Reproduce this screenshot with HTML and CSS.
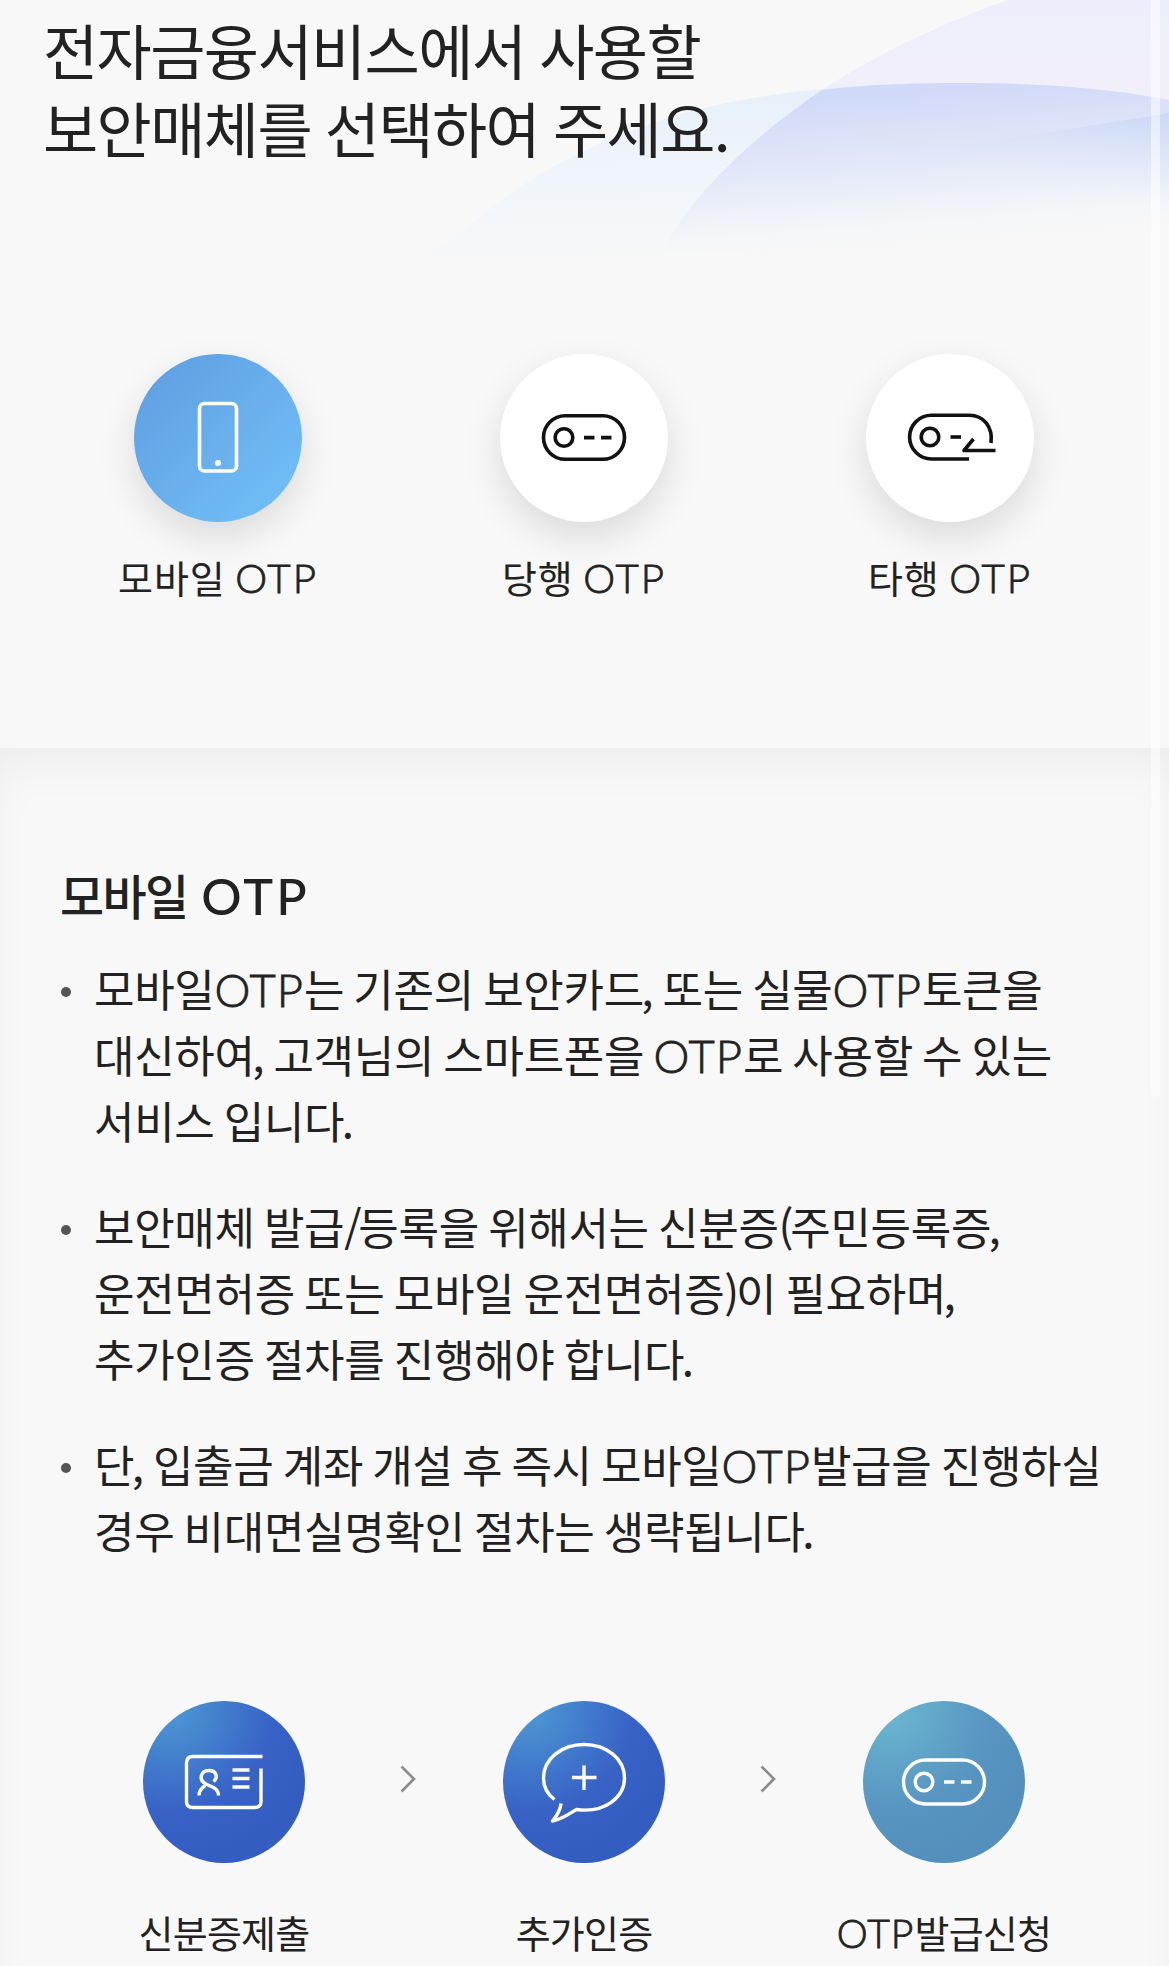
FILE: index.html
```html
<!DOCTYPE html>
<html lang="ko">
<head>
<meta charset="utf-8">
<title>보안매체 선택</title>
<link rel="stylesheet" href="styles.css">
</head>
<body>
<main class="page">
  <section class="select">
    <svg class="wave" viewBox="0 0 769 270" aria-hidden="true">
      <defs>
        <linearGradient id="violet" gradientUnits="userSpaceOnUse" x1="0" y1="0" x2="0" y2="250">
          <stop offset="0" stop-color="#eeedfb"/><stop offset=".4" stop-color="#f0effa"/><stop offset="1" stop-color="#f8f8f8" stop-opacity="0"/>
        </linearGradient>
        <linearGradient id="pale" gradientUnits="userSpaceOnUse" x1="400" y1="80" x2="405" y2="258">
          <stop offset="0" stop-color="#e6effa"/><stop offset=".5" stop-color="#eff5fa"/><stop offset=".75" stop-color="#f4f6f9"/><stop offset="1" stop-color="#f8f8f8"/>
        </linearGradient>
        <linearGradient id="blue" gradientUnits="userSpaceOnUse" x1="600" y1="85" x2="612" y2="240">
          <stop offset="0" stop-color="#d0d9f7"/><stop offset=".35" stop-color="#dfe5f8"/><stop offset=".65" stop-color="#ebeff8"/><stop offset=".85" stop-color="#f5f6f8"/><stop offset="1" stop-color="#f8f8f8"/>
        </linearGradient>
        <linearGradient id="band" gradientUnits="userSpaceOnUse" x1="769" y1="105" x2="749" y2="210">
          <stop offset="0" stop-color="#bccdf4" stop-opacity=".65"/><stop offset="1" stop-color="#dfe8f8" stop-opacity="0"/>
        </linearGradient>
      </defs>
      <path fill="url(#violet)" d="M608 0C550 20 480 52 422 90L500 110H769V0Z"/>
      <path fill="url(#pale)" d="M10 262C60 240 85 210 115 190C230 115 350 83 564 83C650 83 720 90 769 100V262Z"/>
      <path fill="url(#blue)" d="M422 90C460 85 510 83 564 83C650 83 720 90 769 100V250H262C300 182 370 125 422 90Z"/>
      <path fill="url(#band)" d="M220 183C400 166 520 154 769 113V225L220 250Z"/>
    </svg>
    <h1 class="heading">전자금융서비스에서 사용할<br>보안매체를 선택하여 주세요.</h1>
    <div class="media">
      <div class="medium">
        <div class="disc disc-active">
          <svg viewBox="0 0 168 168"><g fill="none" stroke="#fff" stroke-width="3.6"><rect x="65.5" y="49.5" width="37" height="67.5" rx="5"/></g><circle cx="84" cy="109" r="3" fill="#fff"/></svg>
        </div>
        <p class="label">모바일 <span class="latin">OTP</span></p>
      </div>
      <div class="medium">
        <div class="disc">
          <svg viewBox="0 0 168 168"><g fill="none" stroke="#111" stroke-width="3.6"><rect x="43.5" y="61.7" width="81" height="43.6" rx="21.8"/><circle cx="64" cy="83.5" r="8.8"/><path d="M84 83.6h10.5M101 83.6h10.5"/></g></svg>
        </div>
        <p class="label">당행 <span class="latin">OTP</span></p>
      </div>
      <div class="medium">
        <div class="disc">
          <svg viewBox="0 0 168 168"><g fill="none" stroke="#111" stroke-width="3.6"><path d="M103 105H65.500A21.900 21.900 0 0 1 65.500 61.200H103C118 61.200 127 73 125 89"/><circle cx="64" cy="83" r="8.800"/><path d="M84.500 83H95"/><path d="M107.500 85L98 96.500H129.500" stroke-linejoin="round"/></g></svg>
        </div>
        <p class="label">타행 <span class="latin">OTP</span></p>
      </div>
    </div>
  </section>

  <section class="panel">
    <h2 class="title">모바일 <span class="latin">OTP</span></h2>
    <ul class="notes">
      <li>모바일<span class="latin">OTP</span>는 기존의 보안카드<span class="mark">,</span> 또는 실물<span class="latin">OTP</span>토큰을<br>대신하여<span class="mark">,</span> 고객님의 스마트폰을 <span class="latin">OTP</span>로 사용할 수 있는<br>서비스 입니다<span class="mark">.</span></li>
      <li>보안매체 발급<span class="paren">/</span>등록을 위해서는 신분증<span class="paren">(</span>주민등록증<span class="mark">,</span><br>운전면허증 또는 모바일 운전면허증<span class="paren">)</span>이 필요하며<span class="mark">,</span><br>추가인증 절차를 진행해야 합니다<span class="mark">.</span></li>
      <li>단<span class="mark">,</span> 입출금 계좌 개설 후 즉시 모바일<span class="latin">OTP</span>발급을 진행하실<br>경우 비대면실명확인 절차는 생략됩니다<span class="mark">.</span></li>
    </ul>
    <div class="steps">
      <div class="step">
        <svg class="badge" viewBox="0 0 162 162"><defs><radialGradient id="royal" cx=".16" cy=".04" r=".95"><stop offset="0" stop-color="#4e99d5"/><stop offset=".25" stop-color="#4686cf"/><stop offset=".68" stop-color="#3862c6"/><stop offset="1" stop-color="#345dc2"/></radialGradient></defs><circle cx="81" cy="81" r="81" fill="url(#royal)"/><g fill="none" stroke="#fff" stroke-width="3.400"><path d="M119.500 55.500H50Q43.500 55.500 43.500 62V100.500Q43.500 106.500 50 106.500H111.500Q118 106.500 118 100.500V67.500"/><path d="M89.500 69H106.500M89.500 77.500H106.500M89.500 86H106.500"/><path d="M70.500 80.500C75 77 74 69.500 66 69.500C57 69.500 56 79 62 82.500C68 86 75 86 75.500 94.500M62.500 84.500C58 87 56 90 56 94.500"/></g></svg>
        <p class="label">신분증제출</p>
      </div>
      <svg class="arrow" viewBox="0 0 18 30"><path d="M2.500 2.500L15 15L2.500 27.500" fill="none" stroke="#8b8b8b" stroke-width="2.600"/></svg>
      <div class="step">
        <svg class="badge" viewBox="0 0 162 162"><circle cx="81" cy="81" r="81" fill="url(#royal)"/><g fill="none" stroke="#fff" stroke-width="3.400"><path d="M51.500 98.500C44 93 40.500 85 40.500 77C40.500 58 58.500 43.500 81 43.500C104 43.500 121.500 58 121.500 77C121.500 96 102 112.500 73.500 108.500C67 112 60 118 49.500 120C54.500 114 57.500 108 58 102.500" stroke-linejoin="round"/><path d="M81 64.500V89M69 76.500H93.500"/></g></svg>
        <p class="label">추가인증</p>
      </div>
      <svg class="arrow" viewBox="0 0 18 30"><path d="M2.500 2.500L15 15L2.500 27.500" fill="none" stroke="#8b8b8b" stroke-width="2.600"/></svg>
      <div class="step">
        <svg class="badge" viewBox="0 0 162 162"><defs><radialGradient id="teal" cx=".16" cy=".04" r=".95"><stop offset="0" stop-color="#6cb9d2"/><stop offset=".25" stop-color="#64aacb"/><stop offset=".68" stop-color="#5794bf"/><stop offset="1" stop-color="#5590bd"/></radialGradient></defs><circle cx="81" cy="81" r="81" fill="url(#teal)"/><g fill="none" stroke="#fff" stroke-width="3.400"><rect x="40.500" y="59" width="81" height="44" rx="22"/><circle cx="61" cy="81" r="8.800"/><path d="M81 81H91.500M98 81H108.500"/></g></svg>
        <p class="label"><span class="latin">OTP</span>발급신청</p>
      </div>
    </div>
  </section>
</main>
<div class="scrollbar"></div>
</body>
</html>
```
FILE: styles.css
```css
* { box-sizing: border-box; }

body {
  margin: 0;
  background: #f8f8f8;
  color: #222;
  font-family: "Noto Sans CJK KR", sans-serif;
  letter-spacing: -0.02em;
}

h1, h2, p, ul { margin: 0; padding: 0; font-weight: 400; }

.page {
  height: 1966px;
  overflow: hidden;
  display: flex;
  flex-direction: column;
}

.select { position: relative; flex: 0 0 748px; padding-top: 10px; }

.wave { position: absolute; top: 0; right: 0; width: 769px; height: 270px; }

.heading {
  position: relative;
  padding-left: 43px;
  font-size: 60px;
  line-height: 78px;
  letter-spacing: -1.6px;
  word-spacing: -1.4px;
}

.media {
  display: grid;
  grid-template-columns: repeat(3, 366px);
  padding: 188px 0 0 35px;
}

.medium { display: flex; flex-direction: column; align-items: center; }

.disc {
  width: 168px;
  height: 168px;
  border-radius: 50%;
  background: #fff;
  box-shadow: 0 15px 38px rgba(0, 0, 0, 0.12);
}

.disc svg { display: block; }

.disc-active { background: linear-gradient(135deg, #60a0e2 10%, #70bef6 90%); }

.label {
  font-size: 38px;
  line-height: 56px;
  letter-spacing: -0.8px;
  white-space: nowrap;
}

.medium .label { margin-top: 27px; letter-spacing: 0.9px; word-spacing: -2px; }

.latin {
  font-family: Lato, sans-serif;
  font-weight: 300;
  font-size: 1.03em;
  line-height: 0;
  letter-spacing: 1px;
  -webkit-text-stroke: 0.8px currentColor;
}

.medium .latin { font-size: 1.06em; letter-spacing: 2px; }

.panel {
  flex: 0 0 1232px;
  padding: 117px 0 0 60px;
  box-shadow: inset 0 24px 44px -8px rgba(0, 0, 0, 0.05);
}

.title { font-size: 48px; font-weight: 500; line-height: 58px; letter-spacing: -1.7px; }
.title .latin { margin-left: 2px; font-size: 1.05em; font-weight: 500; letter-spacing: 3.2px; -webkit-text-stroke: 0; }

.notes {
  list-style: none;
  display: flex;
  flex-direction: column;
  gap: 40px;
  margin-top: 32px;
  font-size: 44px;
  line-height: 66px;
  word-spacing: -2.7px;
  white-space: nowrap;
}

.notes li { position: relative; padding-left: 34px; }

.mark { margin-left: -2.5px; }
.paren { letter-spacing: -3.2px; }

.notes li::before {
  content: "";
  position: absolute;
  left: 1px;
  top: 32px;
  width: 10px;
  height: 10px;
  border-radius: 50%;
  background: #555;
}

.steps { display: flex; align-items: flex-start; margin-top: 138px; }

.step {
  width: 240px;
  margin-left: 44px;
  display: flex;
  flex-direction: column;
  align-items: center;
}

.badge { width: 162px; height: 162px; }
.step .label { margin-top: 41px; }

.arrow { flex: none; width: 18px; height: 30px; margin: 63px 0 0 55px; }
.arrow + .step { margin-left: 47px; }

.scrollbar {
  position: absolute;
  top: 0;
  right: 9px;
  width: 9px;
  height: 1097px;
  border-radius: 0 0 5px 5px;
  background: rgba(255, 255, 255, 0.5);
}
```
